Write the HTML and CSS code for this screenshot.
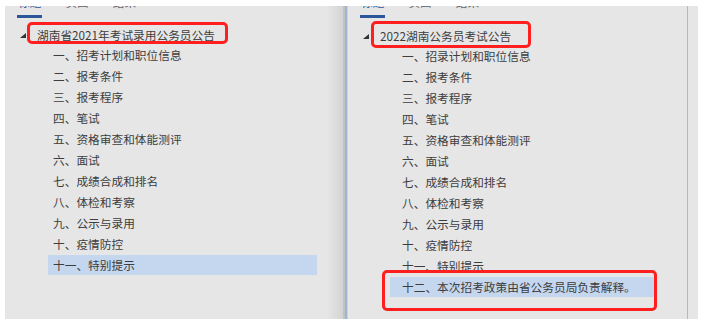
FILE: index.html
```html
<!DOCTYPE html>
<html lang="zh-CN">
<head>
  <meta charset="UTF-8">
  <title>导航窗格 - 公告对比</title>
  <link rel="stylesheet" href="styles.css">
</head>
<body>
  <div class="stage">
    <section class="pane pane-left">
      <div class="tabs">
        <span class="tab active">标题</span>
        <span class="tab">页面</span>
        <span class="tab">结果</span>
      </div>
      <ul class="tree">
        <li class="head"><span class="caret"></span><span class="label">湖南省2021年考试录用公务员公告</span></li>
        <li class="node">一、招考计划和职位信息</li>
        <li class="node">二、报考条件</li>
        <li class="node">三、报考程序</li>
        <li class="node">四、笔试</li>
        <li class="node">五、资格审查和体能测评</li>
        <li class="node">六、面试</li>
        <li class="node">七、成绩合成和排名</li>
        <li class="node">八、体检和考察</li>
        <li class="node">九、公示与录用</li>
        <li class="node">十、疫情防控</li>
        <li class="node selected">十一、特别提示</li>
      </ul>
      <!-- 红框标注 -->
      <div class="mark mark-left-head"></div>
    </section>

    <div class="splitter"></div>

    <section class="pane pane-right">
      <div class="pane-body">
        <div class="tabs">
          <span class="tab active">标题</span>
          <span class="tab">页面</span>
          <span class="tab">结果</span>
        </div>
        <ul class="tree">
          <li class="head"><span class="caret"></span><span class="label">2022湖南公务员考试公告</span></li>
          <li class="node">一、招录计划和职位信息</li>
          <li class="node">二、报考条件</li>
          <li class="node">三、报考程序</li>
          <li class="node">四、笔试</li>
          <li class="node">五、资格审查和体能测评</li>
          <li class="node">六、面试</li>
          <li class="node">七、成绩合成和排名</li>
          <li class="node">八、体检和考察</li>
          <li class="node">九、公示与录用</li>
          <li class="node">十、疫情防控</li>
          <li class="node">十一、特别提示</li>
          <li class="node selected">十二、本次招考政策由省公务员局负责解释。</li>
        </ul>
        <div class="mark mark-right-head"></div>
        <div class="mark mark-right-last"></div>
      </div>
      <div class="strip"></div>
    </section>
  </div>
</body>
</html>
```

FILE: styles.css
```css
body {
  margin: 0;
  background-color: #ffffff;
  font-family: 'Noto Sans CJK SC', 'Noto Sans', sans-serif;
  font-size: 11.7px;
  color: #3d3d3d;
}

.stage {
  display: flex;
  padding: 6px 0 0 5px;
}

.pane {
  position: relative;
  height: 313px;
  overflow: hidden;
}

.pane-left {
  width: 338px;
  background: linear-gradient(to right, #e6e6e6 calc(100% - 16px), #d3d3d3 100%);
}

.splitter {
  width: 5px;
  height: 313px;
  background: linear-gradient(to right, #c2c2c2 0 2px, #9fb3d2 2px 4px, #c9d4e4 4px);
}

.pane-right {
  width: 350px;
  display: flex;
  background-color: #e6e6e6;
}

.pane-body {
  position: relative;
  width: 339px;
}

.strip {
  flex: 1;
  border-left: 1px solid #b7b7b7;
}

/* tabs, mostly cut off by the top edge */
.tabs {
  display: flex;
  gap: 22px;
  margin-top: -12px;
  padding-left: 12px;
}

.tab {
  padding: 0 1px 5px;
  line-height: 16px;
  color: #6a6a6a;
  border-bottom: 3px solid transparent;
}

.tab.active {
  color: #2b579a;
  border-bottom-color: #2b579a;
}

.tree {
  list-style: none;
  margin: 6px 0 0;
  padding: 0;
}

.head {
  display: flex;
  align-items: center;
  height: 21px;
}

.caret {
  width: 0;
  height: 0;
  margin: 2px 11px 0 15px;
  border-left: 6px solid transparent;
  border-bottom: 5px solid #333333;
}

.node {
  height: 20px;
  line-height: 20px;
  margin-bottom: 1px;
  white-space: nowrap;
}

.pane-left .node {
  margin-left: 43px;
  margin-right: 26px;
  padding-left: 5px;
}

.pane-right .node {
  margin-left: 42px;
  margin-right: 32px;
  padding-left: 12px;
}

.pane-right .tree {
  margin-top: 7px;
}

.node.selected {
  background-color: #c5d7ef;
}

/* red annotation boxes drawn over the panes */
.mark {
  position: absolute;
  box-sizing: border-box;
  border: 3px solid #ff1f1f;
  border-radius: 5px;
}

.mark-left-head {
  left: 22px;
  top: 16px;
  width: 201px;
  height: 22px;
}

.mark-right-head {
  left: 23px;
  top: 15px;
  width: 160px;
  height: 27px;
}

.mark-right-last {
  left: 34px;
  top: 264px;
  width: 275px;
  height: 41px;
}
```
